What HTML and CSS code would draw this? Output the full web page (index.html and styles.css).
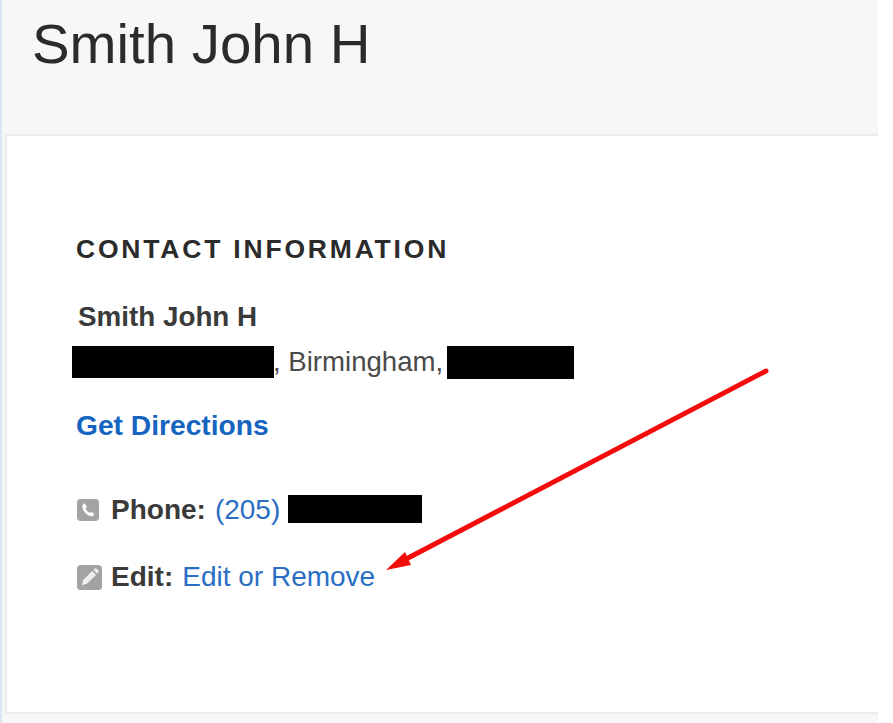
FILE: index.html
```html
<!DOCTYPE html>
<html lang="en">
  <head>
    <meta charset="UTF-8" />
    <meta name="viewport" content="width=device-width, initial-scale=1.0" />
    <title>Smith John H</title>
    <link rel="stylesheet" href="styles.css">
  </head>

  <body>
    <div class="page">
      <h1 class="title">Smith John H</h1>

      <div class="card">
        <h2 class="heading">CONTACT INFORMATION</h2>
        <div class="name">Smith John H</div>
        <div class="address">
          <span class="redact redact-street"></span><span class="comma">, Birmingham,</span><span class="redact redact-zip"></span>
        </div>
        <a class="directions" href="#">Get Directions</a>

        <div class="row row-phone">
          <svg class="icon" viewBox="0 0 24 24" width="22" height="22">
            <rect x="0" y="0" width="24" height="24" rx="4" fill="#a3a3a3" />
            <path d="M8.2 4.6 C6.6 5.4 5.6 6.6 5.8 8.6 C6.3 13 10.6 18 15 18.8 C16.9 19.1 18.3 18 19 16.6 L15.8 13.9 L14.2 15.3 C12.2 14.5 10.1 12.1 9.4 10 L11 8.4 Z" fill="#fff" />
          </svg>
          <b class="label">Phone:</b>
          <a class="link" href="#">(205)</a>
          <span class="redact redact-phone"></span>
        </div>

        <div class="row row-edit">
          <svg class="icon icon-edit" viewBox="0 0 26 26" width="25" height="25">
            <rect x="0" y="0" width="26" height="26" rx="4" fill="#a3a3a3" />
            <path d="M5 21 L6.4 15.6 L15.8 6.2 L19.8 10.2 L10.4 19.6 Z M17 5 L18.4 3.8 C19 3.3 19.8 3.3 20.4 3.8 L22.2 5.6 C22.7 6.2 22.7 7 22.2 7.6 L21 9 Z" fill="#eee" />
          </svg>
          <b class="label">Edit:</b>
          <a class="link" href="#">Edit or Remove</a>
        </div>
      </div>

      <!-- annotation drawn over the screenshot -->
      <svg class="arrow" viewBox="0 0 893 723" width="893" height="723">
        <line x1="766" y1="371" x2="408" y2="558" stroke="#f40c0c" stroke-width="5" stroke-linecap="round" />
        <polygon points="386,570 405,552 411,565" fill="#f40c0c" />
      </svg>
    </div>
  </body>
</html>
```

FILE: styles.css
```css
html,
body {
  margin: 0;
  height: 100%;
  background: #fff;
  overflow: hidden;
}

body {
  font-family: "Liberation Sans", Arial, sans-serif;
  color: #3a3a3a;
}

.page {
  width: 876px;
  height: 723px;
  background: #f7f7f7;
  border-left: 2px solid #dbe4f2;
  position: relative;
  display: flex;
  flex-direction: column;
}

.title {
  margin: 0;
  height: 132px;
  padding: 12px 0 0 30px;
  box-sizing: border-box;
  font-size: 56.4px;
  line-height: 64px;
  font-weight: normal;
  color: #2b2b2b;
}

.card {
  margin: 2px 0 0 3px;
  height: 580px;
  box-sizing: border-box;
  background: #fff;
  border: 2px solid #ececec;
  border-right: none;
  padding: 97px 0 0 69px;
}

.heading {
  margin: 0;
  font-size: 26.5px;
  line-height: 32px;
  letter-spacing: 2.8px;
  font-weight: bold;
  color: #2b2b2b;
}

.name {
  margin: 36px 0 0 2px;
  font-size: 27.8px;
  line-height: 32px;
  font-weight: bold;
}

.address {
  margin: 12px 0 0 -4px;
  display: flex;
  align-items: center;
  height: 34px;
  font-size: 27.6px;
}

.comma {
  margin-left: -1px;
  color: #4a4a4a;
}

.redact {
  display: inline-block;
  background: #000;
}

.redact-street {
  width: 202px;
  height: 32px;
}

.redact-zip {
  width: 127px;
  height: 33px;
  margin-left: 4px;
}

.redact-phone {
  width: 134px;
  height: 28px;
  margin-left: 8px;
  position: relative;
  top: -1px;
}

.directions {
  display: block;
  margin-top: 30px;
  font-size: 28.2px;
  line-height: 32px;
  font-weight: bold;
  color: #1565c0;
  text-decoration: none;
}

.row {
  display: flex;
  align-items: center;
  font-size: 28px;
  line-height: 32px;
}

.row-phone {
  margin-top: 53px;
}

.row-edit {
  margin-top: 35px;
}

.icon {
  flex: none;
  margin-left: 1px;
  margin-right: 12px;
}

.icon-edit {
  margin-right: 9px;
}

.label {
  margin-right: 9px;
}

.link {
  color: #2a6fc4;
  text-decoration: none;
}

.arrow {
  position: absolute;
  left: -2px;
  top: 0;
  pointer-events: none;
}
```
